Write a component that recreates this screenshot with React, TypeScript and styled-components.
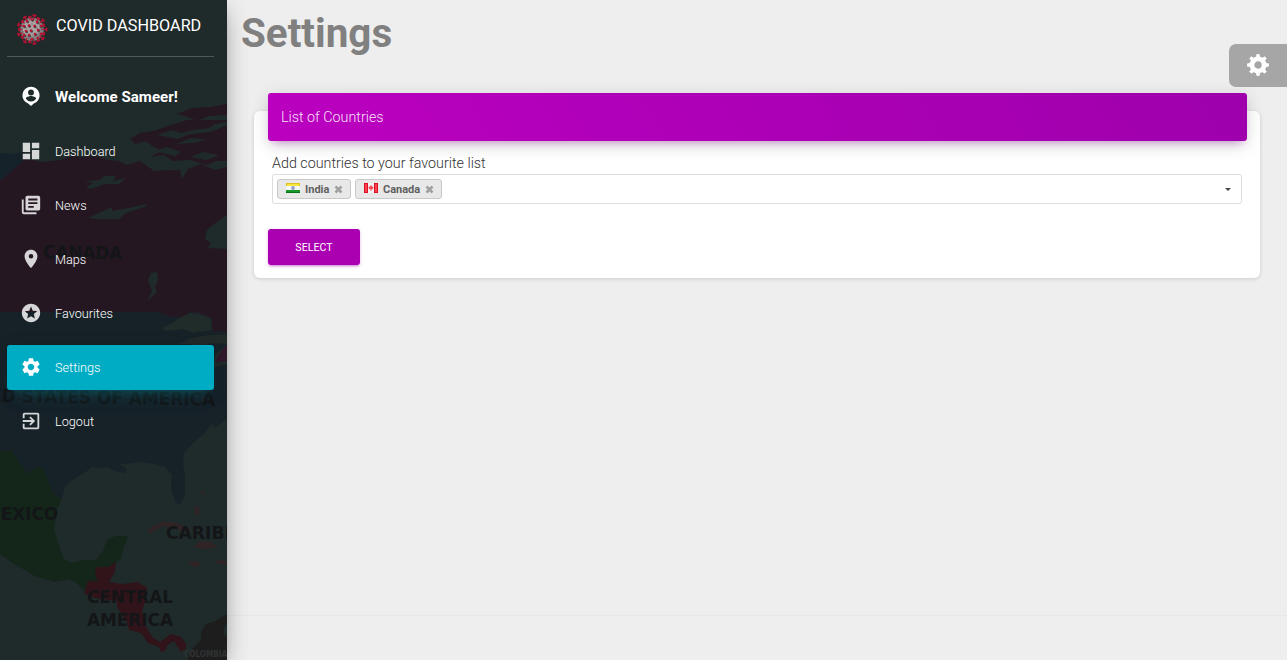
import React from "react";
import styled, { createGlobalStyle, css } from "styled-components";
import {
  MdDashboard,
  MdLibraryBooks,
  MdLocationOn,
  MdStars,
  MdSettings,
  MdExitToApp,
} from "react-icons/md";

const GlobalStyle = createGlobalStyle`
  *, *::before, *::after { box-sizing: border-box; }
  body {
    margin: 0;
    background: #eeeeee;
    color: #3c4858;
    font-family: Roboto, "Liberation Sans", sans-serif;
    font-weight: 300;
    overflow: hidden;
  }
`;

const Page = styled.div`
  display: flex;
  width: 100%;
  height: 100vh;
  overflow: hidden;
`;

const Sidebar = styled.aside`
  position: relative;
  z-index: 1;
  flex: 0 0 227px;
  height: 100%;
  background: #1f2a2b;
  box-shadow: 0 9px 26px -10px rgba(0, 0, 0, 0.42),
    0 4px 22px 0 rgba(0, 0, 0, 0.12), 0 7px 9px -4px rgba(0, 0, 0, 0.2);
`;

const MapArt = styled.svg`
  position: absolute;
  inset: 0;
  width: 227px;
  height: 660px;
`;

const SidebarContent = styled.div`
  position: relative;
  padding: 0 13px 0 7px;
`;

const Brand = styled.div`
  display: flex;
  height: 57px;
  padding: 13px 0 0 8.5px;
  gap: 7.5px;
  border-bottom: 1px solid rgba(180, 200, 190, 0.3);
`;

const BrandName = styled.span`
  padding-top: 2px;
  margin-left: 1px;
  color: #fff;
  font-size: 16.2px;
  line-height: 22px;
  font-weight: 400;
  white-space: nowrap;
`;

const Nav = styled.nav`
  display: flex;
  flex-direction: column;
  gap: 9px;
  padding-top: 17px;
`;

const NavItem = styled.a<{ $active?: boolean; $user?: boolean }>`
  display: flex;
  align-items: center;
  height: 45px;
  padding-left: 13px;
  border-radius: 3px;
  color: #fff;
  font-size: 12.7px;
  font-weight: ${(p) => (p.$user ? 700 : 300)};
  white-space: nowrap;
  ${(p) =>
    p.$user &&
    css`
      font-size: 15.1px;
      margin-bottom: 1px;
    `}
  ${(p) =>
    p.$active &&
    css`
      background: #00acc4;
      box-shadow: 0 12px 20px -10px rgba(0, 172, 193, 0.28),
        0 4px 20px 0 rgba(0, 0, 0, 0.12), 0 7px 8px -5px rgba(0, 172, 193, 0.2);
    `}
`;

const NavIcon = styled.span<{ $bright?: boolean }>`
  display: flex;
  width: 22px;
  height: 22px;
  margin: 0 13px 1px 0;
  font-size: 22px;
  opacity: ${(p) => (p.$bright ? 1 : 0.82)};
`;

const Main = styled.main`
  display: flex;
  flex: 1;
  flex-direction: column;
  min-width: 0;
`;

const Content = styled.div`
  flex: 1;
  padding: 9px 27px 0;
`;

const Title = styled.h1`
  margin: 0 0 0 -13px;
  color: #808080;
  font-size: 40.4px;
  line-height: 50px;
  font-weight: 700;
`;

const Card = styled.section`
  height: 167px;
  margin-top: 52px;
  padding: 0 14px;
  border-radius: 6px;
  background: #fff;
  box-shadow: 0 1px 4px 0 rgba(0, 0, 0, 0.14);
`;

const CardHeader = styled.header`
  position: relative;
  top: -18px;
  height: 48px;
  margin: 0 -1px -18px 0;
  padding-left: 13px;
  border-radius: 3px;
  background: linear-gradient(60deg, #bb00c0, #9e00ac);
  box-shadow: 0 4px 18px 0 rgba(0, 0, 0, 0.14),
    0 6px 9px -5px rgba(156, 0, 172, 0.4);
  color: rgba(255, 255, 255, 0.9);
  font-size: 14.3px;
  line-height: 49px;
`;

const Field = styled.div`
  padding: 12px 4px 0;
`;

const Label = styled.label`
  display: block;
  color: #333;
  font-size: 14.3px;
  line-height: 21px;
`;

const Select = styled.div`
  display: flex;
  align-items: center;
  gap: 4px;
  height: 30px;
  padding: 0 10.5px 0 4px;
  border: 1px solid #dddddf;
  border-radius: 3px;
  background: #fff;
`;

const Tag = styled.span`
  display: flex;
  align-items: center;
  height: 20px;
  padding: 0 7px 0 8px;
  border: 1px solid #c9c9c9;
  border-radius: 3px;
  background: #e8e8e8;
  color: #5f5f5f;
  font-size: 11px;
  font-weight: 700;
`;

const Flag = styled.svg`
  width: 14px;
  height: 10px;
  margin: -2px 5px 0 0;
`;

const Remove = styled.svg`
  width: 9px;
  height: 9px;
  margin-left: 4.6px;
`;

const Caret = styled.i`
  margin-left: auto;
  border: 3px solid transparent;
  border-top-color: #444;
  border-bottom: 0;
`;

const Button = styled.button`
  display: block;
  width: 92px;
  height: 36px;
  margin-top: 25px;
  padding: 0;
  border: 0;
  border-radius: 3px;
  background: #ab00b2;
  box-shadow: 0 2px 2px 0 rgba(156, 0, 172, 0.14),
    0 3px 1px -2px rgba(156, 0, 172, 0.2), 0 1px 4px 0 rgba(156, 0, 172, 0.18);
  color: #fff;
  font: 400 10.7px Roboto, sans-serif;
`;

const Footer = styled.footer`
  height: 45px;
  border-top: 1px solid #e7e7e7;
`;

const SettingsTab = styled.div`
  position: absolute;
  top: 44px;
  right: 0;
  display: flex;
  align-items: center;
  width: 58px;
  height: 43px;
  padding: 0 0 1px 18px;
  border-radius: 7px 0 0 7px;
  background: #a6a6a6;
  color: #fff;
`;

function MapBackground() {
  return (
    <MapArt viewBox="0 0 227 660" aria-hidden="true">
      <g>
        <path fill="#162229" d="M0 153L12 154 24 152 27 159 0 181Z" />
        <path
          fill="#251722"
          d="M0 181L25 159 43 162 60 160 73 156 83 157 97 156 107 160 119 161 127 165 140 161 154 171 168 170 180 170 182 179 188 169 201 164 215 170 227 167V215L214 224 207 230 205 239 211 243 207 248 227 249V335L213 332 211 318 199 313 190 312 184 318 173 318 164 315 158 312H0Z"
        />
        <path
          fill="#251722"
          d="M130 139L140 133 153 131 168 126 187 120 227 120V161L216 161 207 165 190 160 173 161 164 155 150 157 162 151 151 145 145 141 135 144Z"
        />
        <path fill="#251722" d="M177 114L192 108 210 107 227 104V115L209 116 197 121 188 117Z" />
        <path
          fill="#1f2a2b"
          d="M157 135L172 130 181 133 193 130 209 128 215 124 227 122V125L211 132 190 134 178 139ZM176 144L191 138 207 140 193 143ZM155 151L167 147 181 152 175 156ZM190 157L203 152 219 155 207 160Z"
        />
        <path
          fill="#1f2a2b"
          d="M83 182L100 180 104 176 116 176 113 181 126 178 119 184 105 184 91 189 86 187 94 183ZM88 218L101 212 112 207 112 211 129 208 145 204 147 206 126 213 119 219 97 219ZM148 280L151 273 157 272 158 280 155 287 157 292 147 301 152 291Z"
        />
        <path
          fill="#162128"
          d="M0 312H158L169 316 184 318 190 312 211 318 213 332 227 331V419L216 427 211 424 205 433 192 444 184 453 183 464 185 476 185 494 180 505 176 503 171 489 172 475 165 467 154 464 140 462 126 464 119 464 126 468 126 473 115 471 107 467 100 468 92 467 84 473 72 480 65 486 62 499 52 493 47 477 43 468 36 467 28 474 20 464 12 451H0Z"
        />
        <path fill="#202c2a" d="M161 328L173 323 179 318 190 313 204 316 211 319 212 330 193 333 183 329 167 331Z" />
        <path fill="#202a29" d="M179 344L191 338 210 335 227 335V344L211 343 201 348 202 358 194 358 192 344Z" />
        <path fill="#202a29" d="M194 366L205 365 215 355 227 344V364L209 369Z" />
        <path fill="#2f172c" d="M215 362L222 350 227 345V361Z" />
        <path
          fill="#14261a"
          d="M0 451H12L20 464 28 474 36 467 43 468 47 477 52 493 62 499 57 509 54 529 60 549 64 559 72 563 82 560 96 560 103 551 107 539 116 536 128 536 122 552 121 559 110 567H96L97 581 88 582 85 592 77 583 69 579 55 582 37 577 14 564 0 554Z"
        />
        <path
          fill="#31131a"
          d="M96 567H108L116 562 115 572 109 582 122 584 138 582 147 588 146 599 142 611 145 624 152 637 160 642 171 634 181 637 186 644 186 649 181 652 174 641 167 645 166 650 161 652 159 647 148 643 141 633 129 630 127 622 117 607 117 601 94 598 84 593 88 581 98 581 95 574Z"
        />
        <path fill="#1d1d1d" d="M188 656L194 647 201 640 201 632 206 624 213 622 227 614V660H188Z" />
        <path fill="#1f2a2b" d="M227 623L224 628 224 634 227 637Z" />
        <path
          fill="#302426"
          d="M147 532L152 526 163 522 173 522 183 526 192 530 188 533 177 529 163 526 151 533ZM193 547L200 541 211 542 219 547 207 549ZM187 562L196 561 202 565 194 567ZM215 561L222 560 227 562V564L219 564ZM195 493L204 491 206 495 202 493ZM194 509L198 505 200 514 196 516Z"
        />
      </g>
      <g fill="#131517" fontFamily="DejaVu Sans" fontWeight="700">
        <text x="43" y="258" fontSize="18" textLength="79" lengthAdjust="spacingAndGlyphs" transform="rotate(1 43 258)">CANADA</text>
        <text x="-10" y="402" fontSize="18" textLength="225" lengthAdjust="spacingAndGlyphs" transform="rotate(1 0 402)">ED STATES OF AMERICA</text>
        <text x="-16" y="520" fontSize="18" textLength="74" lengthAdjust="spacingAndGlyphs">MEXICO</text>
        <text x="166" y="539" fontSize="18" textLength="111" lengthAdjust="spacingAndGlyphs">CARIBBEAN</text>
        <text x="87" y="603" fontSize="18" textLength="86" lengthAdjust="spacingAndGlyphs">CENTRAL</text>
        <text x="87" y="626" fontSize="18" textLength="86" lengthAdjust="spacingAndGlyphs">AMERICA</text>
        <text x="184" y="657" fontSize="8" fill="#303334" textLength="43" lengthAdjust="spacingAndGlyphs">COLOMBIA</text>
      </g>
    </MapArt>
  );
}

const spikes = Array.from({ length: 18 }, (_, i) => (i * 2 * Math.PI) / 18);
const innerSpikes = [
  [11, 8], [16, 6.5], [21, 9], [25, 13], [8, 13], [13, 12.5], [18.5, 13], [22, 17],
  [10, 18], [15, 17.5], [19, 21], [25, 21], [13, 22], [8, 22], [16, 26], [22, 25],
];

function VirusLogo() {
  return (
    <svg width="32" height="33" viewBox="0 0 32 33">
      <circle cx="16" cy="16.5" r="11.8" fill="#858082" />
      <circle cx="15" cy="15" r="8.5" fill="#aaa3a3" />
      <circle cx="16" cy="16.5" r="9.5" fill="none" stroke="#5d5659" strokeDasharray="1 2" />
      <circle cx="16" cy="16.5" r="5.5" fill="none" stroke="#777073" strokeDasharray="1.5 2" />
      {spikes.map((a, i) => {
        const r = i % 2 ? 12.8 : 14.4;
        return (
          <g key={a} stroke="#b31231" strokeLinecap="round">
            <path
              strokeWidth="1.2"
              d={`M${16 + 10.5 * Math.cos(a)} ${16.5 + 10.5 * Math.sin(a)}L${16 + r * Math.cos(a)} ${16.5 + r * Math.sin(a)}`}
            />
            <path
              strokeWidth="2.1"
              d={`M${16 + r * Math.cos(a - 0.07)} ${16.5 + r * Math.sin(a - 0.07)}L${16 + r * Math.cos(a + 0.07)} ${16.5 + r * Math.sin(a + 0.07)}`}
            />
          </g>
        );
      })}
      {innerSpikes.map(([x, y]) => (
        <g key={`${x}-${y}`}>
          <circle cx={x + 0.7} cy={y + 0.9} r="1.3" fill="#4d3f45" />
          <circle cx={x} cy={y} r="1.3" fill="#b8142f" />
        </g>
      ))}
    </svg>
  );
}

function UserPinIcon() {
  return (
    <svg width="22" height="22" viewBox="0 0 24 24" fill="currentColor">
      <path d="M12 2a9.3 9.3 0 0 0-3.1 18.1L12 23l3.1-2.9A9.3 9.3 0 0 0 12 2zm0 3a3.2 3.2 0 1 1 0 6.4A3.2 3.2 0 0 1 12 5zm0 13a6.5 6.5 0 0 1-5.6-3c0-1.9 3.7-2.9 5.6-2.9s5.6 1 5.6 2.9a6.5 6.5 0 0 1-5.6 3z" />
    </svg>
  );
}

function CogIcon() {
  return (
    <svg width="22" height="22" viewBox="0 0 22 22" fill="none" stroke="currentColor">
      <circle cx="11" cy="11" r="6.1" strokeWidth="4.8" />
      {[0, 45, 90, 135, 180, 225, 270, 315].map((angle) => (
        <path
          key={angle}
          d="M9.4 3.2L9.8 .5H12.2L12.6 3.2Z"
          fill="currentColor"
          strokeWidth="0.8"
          strokeLinejoin="round"
          transform={`rotate(${angle} 11 11)`}
        />
      ))}
    </svg>
  );
}

function IndiaFlag() {
  return (
    <Flag viewBox="0 0 14 10">
      <path fill="#dfc01c" d="M0 0H14V3H0Z" />
      <path fill="#f6e640" d="M1 1H13V3H1Z" />
      <path fill="#f4f6f6" d="M0 3H14V7H0Z" />
      <path fill="#16962b" d="M0 7H14V10H0Z" />
      <path fill="#087319" d="M0 9H14V10H0Z" />
      <circle cx="7" cy="5" r="1.9" fill="#94a0c4" />
    </Flag>
  );
}

function CanadaFlag() {
  return (
    <Flag viewBox="0 0 14 10">
      <path fill="#f6f0f0" d="M0 0H14V10H0Z" />
      <path fill="#dd1224" d="M0 0H4V10H0ZM10 0H14V10H10Z" />
      <path fill="#f8404e" d="M1 1H3V9H1ZM11 1H13V9H11Z" />
      <path fill="#f0505c" d="M7 2L8.2 3.5 9.6 4 8.9 6 7.4 6.5V8H6.6V6.5L5.1 6 4.4 4 5.8 3.5Z" />
    </Flag>
  );
}

function RemoveIcon() {
  return (
    <Remove viewBox="0 0 9 9">
      <path d="M1.5 1.5L7.5 7.5M7.5 1.5L1.5 7.5" stroke="#a0a0a0" strokeWidth="2.6" />
    </Remove>
  );
}

const links = [
  { label: "Dashboard", Icon: MdDashboard },
  { label: "News", Icon: MdLibraryBooks },
  { label: "Maps", Icon: MdLocationOn },
  { label: "Favourites", Icon: MdStars },
  { label: "Settings", Icon: MdSettings, active: true },
  { label: "Logout", Icon: MdExitToApp },
];

export default function App() {
  return (
    <>
      <GlobalStyle />
      <Page>
        <Sidebar>
          <MapBackground />
          <SidebarContent>
            <Brand>
              <VirusLogo />
              <BrandName>COVID DASHBOARD</BrandName>
            </Brand>
            <Nav>
              <NavItem $user>
                <NavIcon $bright>
                  <UserPinIcon />
                </NavIcon>
                Welcome Sameer!
              </NavItem>
              {links.map(({ label, Icon, active }) => (
                <NavItem key={label} $active={active}>
                  <NavIcon $bright={active}>
                    <Icon />
                  </NavIcon>
                  {label}
                </NavItem>
              ))}
            </Nav>
          </SidebarContent>
        </Sidebar>
        <Main>
          <Content>
            <Title>Settings</Title>
            <Card>
              <CardHeader>List of Countries</CardHeader>
              <Field>
                <Label>Add countries to your favourite list</Label>
                <Select>
                  <Tag>
                    <IndiaFlag />
                    India
                    <RemoveIcon />
                  </Tag>
                  <Tag>
                    <CanadaFlag />
                    Canada
                    <RemoveIcon />
                  </Tag>
                  <Caret />
                </Select>
              </Field>
              <Button>SELECT</Button>
            </Card>
          </Content>
          <Footer />
        </Main>
        <SettingsTab>
          <CogIcon />
        </SettingsTab>
      </Page>
    </>
  );
}
